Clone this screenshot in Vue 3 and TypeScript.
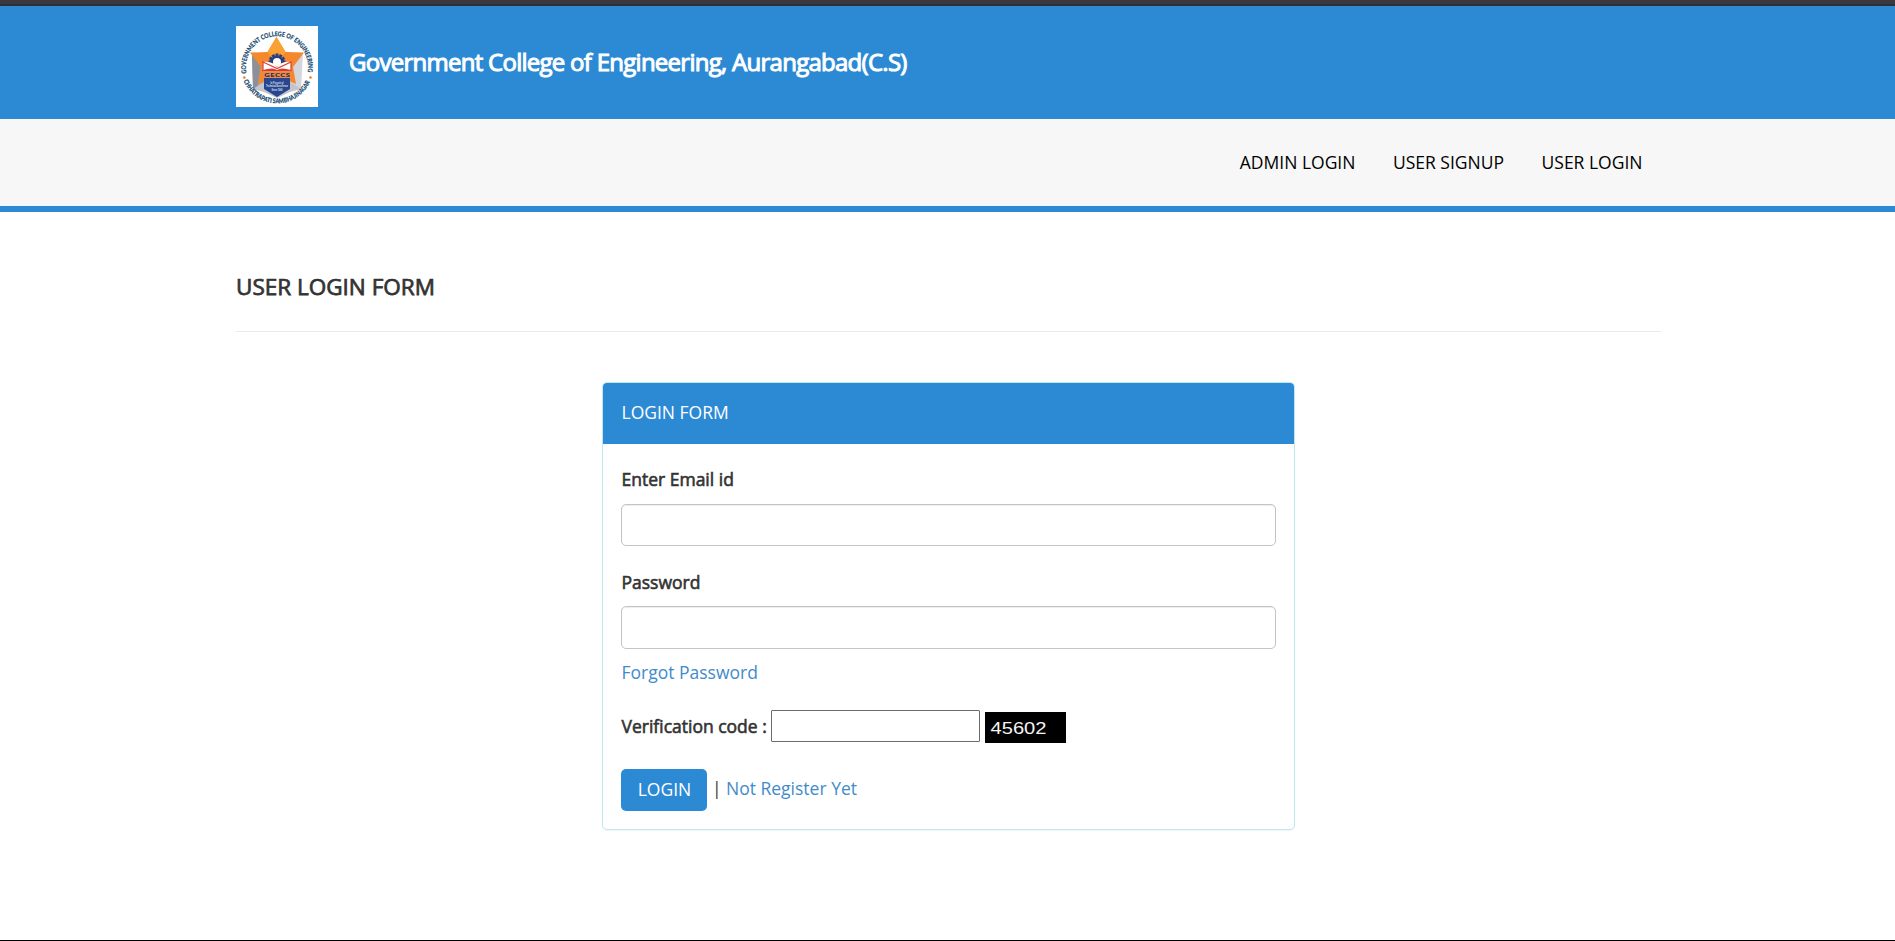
<script setup lang="ts">
import { ref } from 'vue'

const links: string[] = ['ADMIN LOGIN', 'USER SIGNUP', 'USER LOGIN']
const email = ref('')
const password = ref('')
const code = ref('')
const teeth: number[] = [-90, -60, -30, 0, 30, 60, 90]
</script>

<template>
  <div class="page">
    <div class="top-strip"></div>
    <header class="brand">
      <svg class="logo" viewBox="0 0 82 81" role="img" aria-label="College logo">
        <defs>
          <path id="ringTop" d="M 10.6 47.300 A 31 31 0 1 1 71.400 47.300" />
          <path id="ringBottom" d="M 7.600 54.800 A 36 36 0 0 0 74.400 54.800" />
        </defs>
        <rect width="82" height="81" fill="#fff" />
        <path d="M16 27 L29 27 L29 62 L17 63Z" fill="#a3a4ac" />
        <path d="M16 29 L25 38 L21 64 L17 63Z" fill="#8f9097" />
        <path d="M67 27 L53 27 L53 62 L65 63Z" fill="#d5d6db" />
        <path d="M17 63 L28 56 H54 L65 63 L54 66 L41 72 L28 66Z" fill="#c3c5cb" />
        <path d="M40.500 11 L49.500 26 L68 26.500 L57 41 L60 58 L41 50 L22 58 L25 41 L14 26.500 L31.500 26Z" fill="#f5872c" />
        <path d="M40.500 11 L49.500 26 L41 40 L31.500 26Z" fill="#fba033" />
        <path d="M28 42 H54 V63 L41 71 L28 63Z" fill="#28458e" />
        <g fill="#263f82">
          <rect v-for="t in teeth" :key="t" x="39.500" y="27.500" width="3" height="5" :transform="`rotate(${t} 41 36)`" />
        </g>
        <path d="M34.500 38 A6.500 6.500 0 0 1 47.500 38" fill="none" stroke="#263f82" stroke-width="2.500" />
        <circle cx="41" cy="36" r="4" fill="#fff" />
        <path d="M27 36 Q36 35 41 41 Q46 35 55 36 V44 H27Z" fill="#fff" />
        <path d="M27 36 L41 42.500 L55 36 V45 H27Z" fill="none" stroke="#dd4038" stroke-width="1.200" />
        <path d="M27 44 Q37 41 41 44 Q45 41 55 44 V46 H27Z" fill="#d93a32" />
        <rect x="27" y="45" width="28" height="7" fill="#f08a3c" />
        <text class="acronym" x="41" y="50.700" textLength="26" lengthAdjust="spacingAndGlyphs">GECCS</text>
        <text class="motto" x="41" y="58" textLength="13" lengthAdjust="spacingAndGlyphs">In Pursuit of</text>
        <text class="motto" x="41" y="61.400" textLength="22" lengthAdjust="spacingAndGlyphs">Technical Excellence</text>
        <text class="motto" x="41" y="64.800" textLength="11" lengthAdjust="spacingAndGlyphs">Since 1960</text>
        <text class="ring" textLength="108" lengthAdjust="spacingAndGlyphs"><textPath href="#ringTop" textLength="108" lengthAdjust="spacingAndGlyphs">GOVERNMENT COLLEGE OF ENGINEERING</textPath></text>
        <text class="ring" textLength="84" lengthAdjust="spacingAndGlyphs"><textPath href="#ringBottom" textLength="84" lengthAdjust="spacingAndGlyphs">CHHATRAPATI SAMBHAJINAGAR</textPath></text>
        <circle cx="8.300" cy="51.500" r="1.300" fill="#f47b2a" />
        <circle cx="74.500" cy="51.500" r="1.300" fill="#f47b2a" />
      </svg>
      <div class="college">Government College of Engineering, Aurangabad(C.S)</div>
    </header>
    <nav class="menu">
      <a v-for="link in links" :key="link" href="#">{{ link }}</a>
    </nav>
    <main>
      <h4>USER LOGIN FORM</h4>
      <form class="panel" @submit.prevent>
        <div class="panel-heading">LOGIN FORM</div>
        <div class="panel-body">
          <label for="email">Enter Email id</label>
          <input id="email" v-model="email" class="control" type="text" />
          <label for="password" class="second">Password</label>
          <input id="password" v-model="password" class="control tall" type="password" />
          <a class="forgot" href="#">Forgot Password</a>
          <div class="verify">
            <label for="code">Verification code :</label>
            <input id="code" v-model="code" type="text" />
            <svg class="captcha" viewBox="0 0 81 31"><text x="5.500" y="22.300" textLength="56" lengthAdjust="spacingAndGlyphs">45602</text></svg>
          </div>
          <div class="actions">
            <button type="submit">LOGIN</button>
            <span class="bar">|</span>
            <a href="#">Not Register Yet</a>
          </div>
        </div>
      </form>
    </main>
    <div class="bottom-line"></div>
  </div>
</template>

<style>
body {
  margin: 0;
  background: #fff;
}
</style>

<style scoped>
* {
  box-sizing: border-box;
}
.page {
  display: flex;
  flex-direction: column;
  height: 941px;
  overflow: hidden;
  font: 17.5px/25px "Open Sans", sans-serif;
  color: #333;
}
a {
  color: #428bca;
  text-decoration: none;
}
.top-strip {
  height: 6px;
  background: #3a393e;
  border-bottom: 2px solid #302f36;
}
.brand {
  display: flex;
  height: 113px;
  padding: 20px 0 0 236px;
  background: #2c8ad5;
}
.logo {
  width: 82px;
  height: 81px;
}
.ring {
  font: 900 6.6px Lato, sans-serif;
  fill: #174a70;
  stroke: #174a70;
  stroke-width: 0.15px;
}
.acronym {
  font: 700 6px "Open Sans", sans-serif;
  fill: #22346f;
  text-anchor: middle;
}
.motto {
  font: 700 2.6px "Liberation Sans", sans-serif;
  fill: #dfe4f2;
  text-anchor: middle;
}
.college {
  margin: 18px 0 0 31px;
  color: #fff;
  font-size: 24px;
  line-height: 36px;
  letter-spacing: -0.73px;
  white-space: nowrap;
  -webkit-text-stroke: 1px #fff;
}
.menu {
  display: flex;
  justify-content: flex-end;
  gap: 37.5px;
  height: 93px;
  padding: 31px 252.5px 0 0;
  background: #f7f7f7;
  border-bottom: 6px solid #2c8ad5;
}
.menu a {
  color: #000;
}
main {
  width: 1425px;
  margin-left: 236px;
}
h4 {
  height: 120px;
  margin: 0 0 50px;
  padding-top: 62px;
  font-size: 22.5px;
  font-weight: 400;
  line-height: 25px;
  border-bottom: 1px solid #eaeaea;
  -webkit-text-stroke: 0.75px #333;
}
.panel {
  width: 693px;
  height: 448px;
  margin-left: 366px;
  border: 1px solid #bce8f1;
  border-radius: 5px;
  box-shadow: 0 1px 1px rgba(0, 0, 0, 0.05);
}
.panel-heading {
  height: 61px;
  padding: 17px 18.5px;
  color: #fff;
  background: #2c8ad5;
  border-radius: 4px 4px 0 0;
}
.panel-body {
  padding: 23px 18px 0;
}
label {
  display: block;
  height: 37px;
  padding-left: 0.5px;
  -webkit-text-stroke: 0.6px #333;
}
.control {
  display: block;
  width: 655px;
  height: 42px;
  margin: 0;
  border: 1px solid #c4c4c4;
  border-radius: 5px;
  box-shadow: inset 0 1px 1px rgba(0, 0, 0, 0.075);
}
.control.tall {
  height: 43px;
}
.second {
  height: 36px;
  margin-top: 24px;
}
.forgot {
  display: block;
  margin-top: 11px;
  padding-left: 0.5px;
}
.verify {
  display: flex;
  height: 34px;
  margin-top: 25px;
}
.verify label {
  width: 150px;
  padding-top: 4px;
  white-space: nowrap;
}
.verify input {
  width: 209px;
  height: 32px;
  margin: 0 5px 0 0;
  border: 1px solid #6b6b6b;
  border-radius: 1px;
}
.captcha {
  width: 81px;
  height: 31px;
  margin-top: 2px;
  background: #000;
}
.captcha text {
  font: 17px "Liberation Sans", sans-serif;
  fill: #f4f4f4;
}
.actions {
  display: flex;
  margin-top: 25px;
}
.actions button {
  width: 86px;
  height: 42px;
  padding: 0 0 2px 1px;
  color: #fff;
  font: inherit;
  background: #2c8ad5;
  border: 0;
  border-radius: 5px;
}
.actions a {
  margin-top: 7px;
}
.bar {
  width: 19px;
  margin-top: 7px;
  padding-left: 5px;
}
.bottom-line {
  height: 1px;
  margin-top: auto;
  background: #000;
}
</style>
